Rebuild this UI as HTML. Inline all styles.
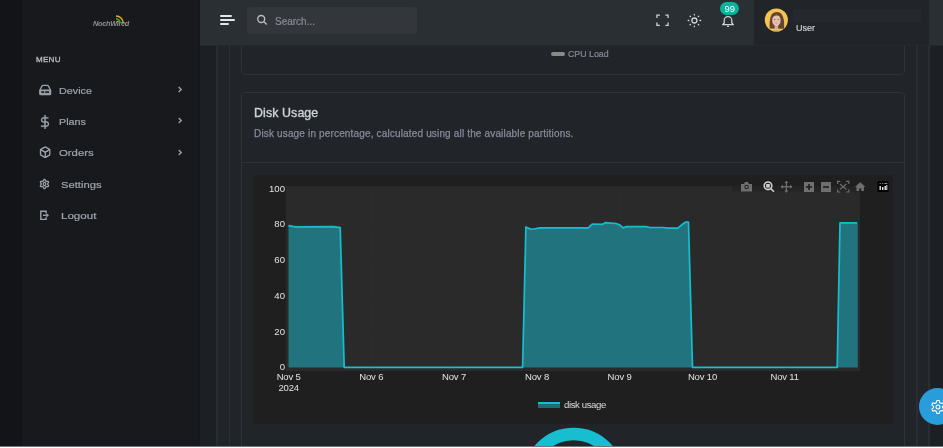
<!DOCTYPE html>
<html><head><meta charset="utf-8">
<style>
*{margin:0;padding:0;box-sizing:border-box}
html,body{width:943px;height:448px;overflow:hidden;background:#131417;font-family:"Liberation Sans",sans-serif}
.a{position:absolute}
body *{will-change:transform}
#sidebar{left:22px;top:0;width:178px;height:448px;background:#18191d;border-right:1px solid #16171a}
#sbedge{left:21px;top:0;width:1px;height:448px;background:#111215}
#header{left:200px;top:0;width:743px;height:45px;background:#2a2f33;z-index:5}
#content{left:217px;top:45px;width:713px;height:403px;background:#212529}
#lstrip{left:200px;top:45px;width:17px;height:403px;background:#1c1f23}
#rightstrip{left:930px;top:45px;width:13px;height:403px;background:#1c1f23}
.vl{top:45px;width:1px;height:403px;background:#2d3135}
.card{border:1px solid #2f3337;border-radius:4px;background:#212529}
.menu-t{color:#b4b8bc;font-size:8px;font-weight:normal;-webkit-text-stroke:0.35px #b4b8bc;letter-spacing:0.3px}
.mi{color:#9ea5ad;font-size:9.9px;-webkit-text-stroke:0.2px #9ea5ad;white-space:nowrap;transform:scaleX(1.09);transform-origin:0 0}
.ic{stroke:#9aa1a9;fill:none;stroke-width:2;stroke-linecap:round;stroke-linejoin:round}
#bottomline{left:0;top:446px;width:943px;height:2px;background:linear-gradient(#747474 0 1px,#fff 1px 2px);z-index:20}
</style></head><body>
<div class="a" id="sbedge"></div>
<div class="a" id="sidebar"></div>
<div class="a" id="header"></div>
<div class="a" style="left:200px;top:45px;width:743px;height:1px;background:#25292d;z-index:5"></div>
<div class="a" id="lstrip"></div>
<div class="a" id="content"></div>
<div class="a" id="rightstrip"></div>
<div class="a vl" style="left:216px;width:2px;background:#292c30"></div>
<div class="a vl" style="left:229px"></div>
<div class="a vl" style="left:916px;width:2px;background:#2a2d31"></div>
<div class="a vl" style="left:928px;width:2px;background:#2a2d31"></div>

<!-- cards -->
<div class="a card" style="left:241px;top:-20px;width:664px;height:95px"></div>
<div class="a card" style="left:241px;top:92px;width:664px;height:400px"></div>
<div class="a" style="left:242px;top:162px;width:662px;height:1px;background:#2f3337"></div>

<!-- header user region -->
<div class="a" style="left:754px;top:0;width:175px;height:45px;background:#212529;z-index:6"></div>
<div class="a" style="left:793px;top:8.5px;width:128px;height:13px;background:#25282c;z-index:6"></div>

<!-- logo -->
<div class="a" style="left:92.5px;top:18.8px;font-size:7.4px;font-style:italic;font-weight:bold;color:#8e8e8e;letter-spacing:-0.32px">NochWired</div>
<svg class="a" style="left:110px;top:12px" width="16" height="14" viewBox="0 0 16 14">
  <path d="M6 3.9 A7.1 7.1 0 0 1 13.1 11" stroke="#e0a82e" stroke-width="1.5" fill="none"/>
  <path d="M6 6.9 A4.1 4.1 0 0 1 10.1 11" stroke="#2fb52f" stroke-width="1.5" fill="none"/>
  <circle cx="7.4" cy="9.5" r="0.8" fill="#e0a82e"/>
</svg>

<!-- menu -->
<div class="a menu-t" style="left:36px;top:55.2px">MENU</div>

<svg class="a" style="left:34px;top:80px" width="22" height="20" viewBox="0 0 22 20"><path d="M5.8 10.2 L7.9 6.1 Q8.4 5.4 9.3 5.4 H13.1 Q14 5.4 14.5 6.1 L16.6 10.2 V13.7 Q16.6 14.6 15.7 14.6 H6.7 Q5.8 14.6 5.8 13.7 Z" stroke="#9aa1a9" stroke-width="1.35" fill="none" stroke-linejoin="round"/><rect x="5.8" y="9.6" width="10.8" height="5" rx="0.8" fill="#9aa1a9"/><rect x="7.3" y="11.1" width="2.9" height="2" fill="#2a2c30"/><rect x="11.2" y="11.1" width="3.9" height="2" fill="#2a2c30"/></svg>
<div class="a mi" style="left:58.9px;top:85px">Device</div>

<svg class="a" style="left:38px;top:114.8px" width="14" height="14" viewBox="0 0 24 24"><g class="ic" style="stroke-width:2.5"><line x1="12" y1="1" x2="12" y2="23"/><path d="M17 5H9.5a3.5 3.5 0 0 0 0 7h5a3.5 3.5 0 0 1 0 7H6"/></g></svg>
<div class="a mi" style="left:58.9px;top:116.3px">Plans</div>

<svg class="a" style="left:38.9px;top:146.2px" width="12.4" height="12.4" viewBox="0 0 24 24"><g class="ic" style="stroke-width:2.7"><path d="M21 16V8a2 2 0 0 0-1-1.73l-7-4a2 2 0 0 0-2 0l-7 4A2 2 0 0 0 3 8v8a2 2 0 0 0 1 1.73l7 4a2 2 0 0 0 2 0l7-4A2 2 0 0 0 21 16z"/><polyline points="3.27 6.96 12 12.01 20.73 6.96"/><line x1="12" y1="22.08" x2="12" y2="12"/></g></svg>
<div class="a mi" style="left:58.9px;top:147.3px;transform:scaleX(1.15)">Orders</div>

<svg class="a" style="left:34px;top:174px" width="22" height="22" viewBox="0 0 22 22"><g stroke="#9aa1a9" stroke-width="1.3" fill="none" stroke-linejoin="round"><path d="M13.55 10.00 L13.60 10.21 L13.74 10.43 L13.94 10.70 L14.17 11.00 L14.37 11.33 L14.50 11.68 L14.52 12.01 L14.43 12.30 L14.23 12.52 L13.93 12.67 L13.56 12.73 L13.17 12.72 L12.80 12.68 L12.47 12.63 L12.20 12.63 L12.00 12.68 L11.85 12.83 L11.72 13.07 L11.60 13.37 L11.45 13.72 L11.26 14.06 L11.02 14.34 L10.75 14.53 L10.45 14.60 L10.15 14.53 L9.88 14.34 L9.64 14.06 L9.45 13.72 L9.30 13.37 L9.18 13.07 L9.05 12.83 L8.90 12.68 L8.70 12.63 L8.43 12.63 L8.10 12.68 L7.73 12.72 L7.34 12.73 L6.97 12.67 L6.67 12.52 L6.47 12.30 L6.38 12.01 L6.40 11.68 L6.53 11.33 L6.73 11.00 L6.96 10.70 L7.16 10.43 L7.30 10.21 L7.35 10.00 L7.30 9.79 L7.16 9.57 L6.96 9.30 L6.73 9.00 L6.53 8.67 L6.40 8.32 L6.38 7.99 L6.47 7.70 L6.67 7.48 L6.97 7.33 L7.34 7.27 L7.73 7.28 L8.10 7.32 L8.43 7.37 L8.70 7.37 L8.90 7.32 L9.05 7.17 L9.18 6.93 L9.30 6.63 L9.45 6.28 L9.64 5.94 L9.88 5.66 L10.15 5.47 L10.45 5.40 L10.75 5.47 L11.02 5.66 L11.26 5.94 L11.45 6.28 L11.60 6.63 L11.72 6.93 L11.85 7.17 L12.00 7.32 L12.20 7.37 L12.47 7.37 L12.80 7.32 L13.17 7.28 L13.56 7.27 L13.93 7.33 L14.23 7.48 L14.43 7.70 L14.52 7.99 L14.50 8.32 L14.37 8.67 L14.17 9.00 L13.94 9.30 L13.74 9.57 L13.60 9.79Z"/><ellipse cx="10.45" cy="10" rx="1.3" ry="1.7"/></g></svg>
<div class="a mi" style="left:61px;top:178.7px;transform:scaleX(1.135)">Settings</div>

<svg class="a" style="left:34px;top:205px" width="22" height="22" viewBox="0 0 22 22"><g stroke="#9aa1a9" stroke-width="1.4" fill="none"><path d="M12.1 8.2V6.3H6.8V14.4H12.1V12.3"/><line x1="9" y1="10.3" x2="12.8" y2="10.3"/></g><path d="M12.3 8.1L15 10.3L12.3 12.5Z" fill="#9aa1a9"/></svg>
<div class="a mi" style="left:61px;top:210px;transform:scaleX(1.17)">Logout</div>

<svg class="a" style="left:176px;top:85px" width="8" height="9" viewBox="0 0 8 9"><polyline points="2.7,2 5.2,4.5 2.7,7" stroke="#9aa1a9" stroke-width="1.4" fill="none"/></svg>
<svg class="a" style="left:176px;top:116px" width="8" height="9" viewBox="0 0 8 9"><polyline points="2.7,2 5.2,4.5 2.7,7" stroke="#9aa1a9" stroke-width="1.4" fill="none"/></svg>
<svg class="a" style="left:176px;top:148px" width="8" height="9" viewBox="0 0 8 9"><polyline points="2.7,2 5.2,4.5 2.7,7" stroke="#9aa1a9" stroke-width="1.4" fill="none"/></svg>

<div style="position:absolute;left:0;top:0;z-index:7">
<div class="a" style="left:219.8px;top:14.9px;width:11.8px;height:1.6px;border-radius:1px;background:#e2e5e9"></div>
<div class="a" style="left:219.8px;top:19.2px;width:14.6px;height:1.6px;border-radius:1px;background:#e2e5e9"></div>
<div class="a" style="left:219.8px;top:23.4px;width:9.1px;height:1.6px;border-radius:1px;background:#e2e5e9"></div>

<div class="a" style="left:247px;top:7px;width:170px;height:27px;background:#33373b;border-radius:3px"></div>
<svg class="a" style="left:255px;top:13px" width="14" height="14" viewBox="0 0 14 14"><circle cx="6.2" cy="6" r="3.5" stroke="#b8bec4" stroke-width="1.35" fill="none"/><line x1="8.8" y1="8.6" x2="11.7" y2="11.6" stroke="#b8bec4" stroke-width="1.4"/></svg>
<div class="a" style="left:275px;top:15.8px;font-size:10px;color:#878a99;-webkit-text-stroke:0.2px #878a99">Search...</div>

<svg class="a" style="left:655px;top:13px" width="15" height="15" viewBox="0 0 15 15"><g stroke="#ced4da" stroke-width="1.25" fill="none"><polyline points="1.9,4.9 1.9,2.1 4.9,2.1"/><polyline points="10.4,2.1 13.1,2.1 13.1,4.9"/><polyline points="13.1,9.6 13.1,12.3 10.4,12.3"/><polyline points="4.9,12.3 1.9,12.3 1.9,9.6"/></g></svg>
<svg class="a" style="left:687px;top:12.6px" width="15" height="15" viewBox="0 0 15 15"><g stroke="#ced4da" stroke-width="1.3" fill="none" stroke-linecap="round"><circle cx="7.4" cy="7.5" r="2.5"/><line x1="7.4" y1="1.3" x2="7.4" y2="1.9"/><line x1="7.4" y1="13.1" x2="7.4" y2="13.7"/><line x1="1.2" y1="7.5" x2="1.8" y2="7.5"/><line x1="13" y1="7.5" x2="13.6" y2="7.5"/><line x1="3.1" y1="3.2" x2="3.5" y2="3.6"/><line x1="11.3" y1="11.4" x2="11.7" y2="11.8"/><line x1="3.1" y1="11.8" x2="3.5" y2="11.4"/><line x1="11.3" y1="3.6" x2="11.7" y2="3.2"/></g></svg>
<svg class="a" style="left:721px;top:13.5px" width="14" height="14" viewBox="0 0 14 14"><g stroke="#ced4da" stroke-width="1.25" fill="none" stroke-linejoin="round"><path d="M3.2 9V6.4a3.8 3.8 0 0 1 7.6 0V9l1.5 1.7H1.7z"/><path d="M6 12.3h2"/></g></svg>
<div class="a" style="left:719.8px;top:2.3px;width:19.4px;height:13px;border-radius:7px;background:#0ab39c;color:#fff;font-size:9.4px;text-align:center;line-height:13px;z-index:2">99</div>

<!-- avatar -->
<svg class="a" style="left:762px;top:6px" width="29" height="28" viewBox="0 0 29 28">
  <defs><clipPath id="av"><circle cx="14.35" cy="14" r="11.55"/></clipPath></defs>
  <circle cx="14.35" cy="14" r="11.55" fill="#f4c352"/>
  <g clip-path="url(#av)">
    <path d="M7.8 22.5 C7.2 17 8 11.5 9.6 8.6 C11.5 5.3 17.5 5 19.8 8.4 C22 11.5 22.6 17 22 22.8 Z" fill="#664430"/>
    <rect x="12.6" y="18" width="3.6" height="5" fill="#d9a994"/>
    <ellipse cx="14.4" cy="14.4" rx="4.2" ry="5.6" fill="#e8c2ae"/>
    <path d="M10.2 11.2 C11 8.3 16 7.6 18.6 10.4 C17 9.2 12.5 9.2 10.2 11.2Z" fill="#6a4630"/>
    <rect x="12" y="13.3" width="1.3" height="0.8" fill="#5a3a2a"/><rect x="15.5" y="13.3" width="1.3" height="0.8" fill="#5a3a2a"/>
    <rect x="13.2" y="16.6" width="2.4" height="0.8" fill="#c97f7a"/>
    <path d="M5 30 C6.5 22.8 22 22.8 24 30 Z" fill="#9a9cab"/>
  </g>
</svg>
<div class="a" style="left:796px;top:22.7px;font-size:9px;color:#ced4da;-webkit-text-stroke:0.15px #ced4da">User</div>

</div>
<!-- CPU legend -->
<div class="a" style="left:551px;top:51.5px;width:14px;height:4px;background:#8a8a8a;border-radius:2px"></div>
<div class="a" style="left:568px;top:49px;font-size:8.8px;color:#878a99;-webkit-text-stroke:0.2px #878a99">CPU Load</div>

<!-- Disk usage header -->
<div class="a" style="left:253.5px;top:105.6px;font-size:12.4px;font-weight:normal;-webkit-text-stroke:0.35px #ced4da;letter-spacing:0.1px;color:#ced4da">Disk Usage</div>
<div class="a" style="left:253.5px;top:127.5px;font-size:10px;letter-spacing:0.16px;color:#878a99;-webkit-text-stroke:0.25px #878a99">Disk usage in percentage, calculated using all the available partitions.</div>

<!-- chart -->
<svg class="a" style="left:0;top:0" width="943" height="448" viewBox="0 0 943 448">
  <rect x="253" y="175" width="640" height="249" fill="#1f1f1f"/>
  <rect x="286" y="186" width="574" height="185" fill="#2a2a2a"/>
  <g stroke="#2c2c2c" stroke-width="1">
    <line x1="371.5" y1="186" x2="371.5" y2="371"/><line x1="454.5" y1="186" x2="454.5" y2="371"/>
    <line x1="537.5" y1="186" x2="537.5" y2="371"/><line x1="620.5" y1="186" x2="620.5" y2="371"/>
    <line x1="702.5" y1="186" x2="702.5" y2="371"/><line x1="785.5" y1="186" x2="785.5" y2="371"/>
    <line x1="286" y1="224.5" x2="860" y2="224.5"/><line x1="286" y1="260.5" x2="860" y2="260.5"/>
    <line x1="286" y1="296.5" x2="860" y2="296.5"/><line x1="286" y1="331.5" x2="860" y2="331.5"/>
  </g>
  <rect x="732" y="175" width="161" height="16.5" fill="rgba(31,31,31,0.55)"/>
  <polygon fill="rgba(23,190,207,0.5)" points="288.5,367.4 288.5,225.6 295.3,226.9 333.4,226.6 340.2,227.6 344.2,367.4 522.6,367.4 525.9,226.9 530.4,229 534.1,229 539.9,227.9 588.2,227.9 592.2,224 602.1,224.4 605.3,222.7 615.9,223.5 619.6,224.8 623.3,227.8 626.5,226.6 645.6,226.6 650.4,227.5 663.6,227.5 667.9,228.2 677.9,228.2 681.7,224.8 685.4,222.2 688.5,222.2 692.5,367.4 837.2,367.4 840,222.9 857.8,222.9 857.8,367.4"/>
  <polyline fill="none" stroke="#17becf" stroke-width="1.7" stroke-linejoin="round" points="288.5,225.6 295.3,226.9 333.4,226.6 340.2,227.6 344.2,367.4 522.6,367.4 525.9,226.9 530.4,229 534.1,229 539.9,227.9 588.2,227.9 592.2,224 602.1,224.4 605.3,222.7 615.9,223.5 619.6,224.8 623.3,227.8 626.5,226.6 645.6,226.6 650.4,227.5 663.6,227.5 667.9,228.2 677.9,228.2 681.7,224.8 685.4,222.2 688.5,222.2 692.5,367.4 837.2,367.4 840,222.9 857.1,222.9"/>
  <g font-family="Liberation Sans" font-size="9.6" fill="#e2e2e2" text-anchor="end">
    <text x="285" y="191.8">100</text>
    <text x="285" y="227.3">80</text>
    <text x="285" y="263">60</text>
    <text x="285" y="298.8">40</text>
    <text x="285" y="334.6">20</text>
    <text x="285" y="370.4">0</text>
  </g>
  <g font-family="Liberation Sans" font-size="9.5" letter-spacing="-0.15" fill="#e2e2e2" text-anchor="middle">
    <text x="288.7" y="380">Nov 5</text>
    <text x="288.7" y="391.3">2024</text>
    <text x="371.3" y="380">Nov 6</text>
    <text x="454" y="380">Nov 7</text>
    <text x="537" y="380">Nov 8</text>
    <text x="619.6" y="380">Nov 9</text>
    <text x="702.5" y="380">Nov 10</text>
    <text x="784.7" y="380">Nov 11</text>
  </g>
  <!-- legend -->
  <rect x="538" y="403" width="22" height="5" fill="rgba(23,190,207,0.5)"/>
  <line x1="538" y1="403" x2="560" y2="403" stroke="#17becf" stroke-width="2"/>
  <text x="564" y="408.2" font-family="Liberation Sans" font-size="9.6" letter-spacing="-0.4" fill="#dcdcdc">disk usage</text>
  <!-- modebar -->
  <g fill="#6f6f6f">
    <path d="M741 184h3l1-2h3l1 2h3v7.5h-11z"/>
  </g>
  <circle cx="746.6" cy="187" r="2.2" fill="#1f1f1f"/>
  <circle cx="746.6" cy="187" r="1.3" fill="#6f6f6f"/>
  <g stroke="#d0d0d0" stroke-width="1.6" fill="none"><circle cx="768" cy="185.8" r="3.8"/><line x1="770.8" y1="188.6" x2="774" y2="191.8"/></g>
  <rect x="766.2" y="184" width="3.6" height="3.6" fill="#d0d0d0"/>
  <g stroke="#6f6f6f" stroke-width="1.3" fill="none"><line x1="786.4" y1="181.5" x2="786.4" y2="192"/><line x1="781" y1="186.7" x2="792" y2="186.7"/></g>
  <g fill="#6f6f6f"><path d="M786.4 180.8l-2 2.2h4z M786.4 192.7l-2-2.2h4z M780.7 186.7l2.2-2v4z M792.2 186.7l-2.2-2v4z"/></g>
  <rect x="804" y="182" width="10" height="10" fill="#6f6f6f"/>
  <g stroke="#1f1f1f" stroke-width="1.6"><line x1="806" y1="187" x2="812" y2="187"/><line x1="809" y1="184" x2="809" y2="190"/></g>
  <rect x="821" y="182" width="10" height="10" fill="#6f6f6f"/>
  <line x1="823" y1="187" x2="829" y2="187" stroke="#1f1f1f" stroke-width="1.6"/>
  <g stroke="#6f6f6f" stroke-width="1.2" fill="none">
    <polyline points="837.6,184 837.6,181.4 840.2,181.4"/><polyline points="846.2,181.4 848.8,181.4 848.8,184"/>
    <polyline points="848.8,189.4 848.8,192 846.2,192"/><polyline points="840.2,192 837.6,192 837.6,189.4"/>
    <line x1="840" y1="184" x2="846.4" y2="189.4"/><line x1="846.4" y1="184" x2="840" y2="189.4"/>
  </g>
  <path d="M860.2 182.2l5.3 4.7h-1.6v4h-2.6v-2.5h-2.2v2.5h-2.6v-4h-1.6z" fill="#6f6f6f"/>
  <rect x="877.5" y="181" width="11" height="11" rx="1.5" fill="#000"/>
  <g fill="#e8e8e8"><rect x="879.5" y="186" width="1.4" height="4"/><rect x="882" y="187" width="1.4" height="3"/><rect x="884.5" y="186" width="1.4" height="4"/><rect x="886.3" y="185" width="1" height="5"/></g>
  <g fill="#d43f6a"><rect x="879.5" y="183" width="1.4" height="1"/><rect x="882" y="183" width="1.4" height="1"/></g>
  <g fill="#5ec8d8"><rect x="884.5" y="183" width="1.4" height="1"/><rect x="886.3" y="183" width="1" height="1"/></g>
  <!-- donut -->
  <circle cx="573.6" cy="479" r="45" stroke="#17becf" stroke-width="12.5" fill="none"/>
</svg>

<!-- customizer button -->
<div class="a" style="left:919px;top:388px;width:37px;height:37px;border-radius:50%;background:#299cdb"></div>
<svg class="a" style="left:928.7px;top:397.6px" width="18" height="18" viewBox="0 0 18 18"><g stroke="#fff" stroke-width="1.05" fill="none" stroke-linejoin="round"><path d="M7.52 4.54 L7.73 2.52 L10.27 2.52 L10.48 4.54 L12.13 5.49 L13.97 4.66 L15.24 6.86 L13.60 8.05 L13.60 9.95 L15.24 11.14 L13.97 13.34 L12.13 12.51 L10.48 13.46 L10.27 15.48 L7.73 15.48 L7.52 13.46 L5.87 12.51 L4.03 13.34 L2.76 11.14 L4.40 9.95 L4.40 8.05 L2.76 6.86 L4.03 4.66 L5.87 5.49Z"/><circle cx="9" cy="9" r="2"/></g></svg>

<div class="a" id="bottomline"></div>
</body></html>
